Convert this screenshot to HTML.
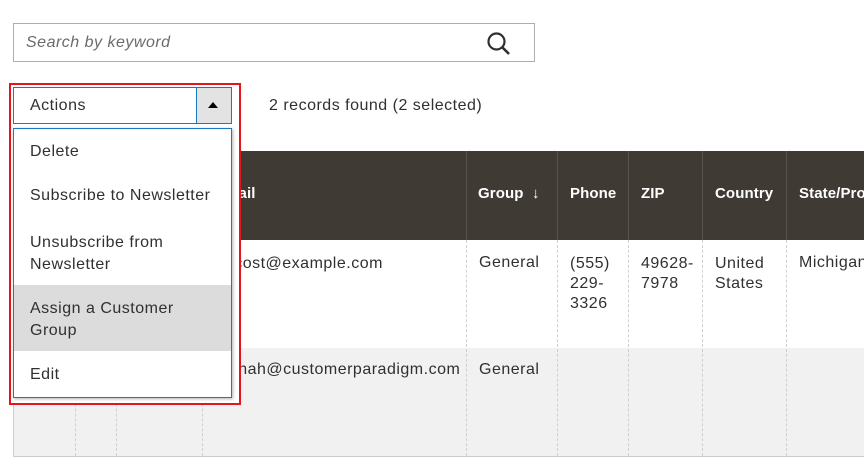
<!DOCTYPE html>
<html><head><style>
body{margin:0;width:864px;height:469px;background:#fff;font-family:"Liberation Sans",sans-serif;color:#303030;position:relative;overflow:hidden}
.a{position:absolute}
.t{font-size:16px;letter-spacing:0.5px}
.h{font-size:15px;font-weight:bold;color:#fff;top:185px;letter-spacing:0.1px}
.vl{position:absolute;width:0;border-left:1px dashed #d0d0d0}
.hl{position:absolute;width:0;border-left:1px solid #5a534d;top:151px;height:89px}
</style></head><body>
<div class="a" style="left:13px;top:23px;width:520px;height:37px;border:1px solid #adadad"></div>
<div class="a t" style="left:26px;top:34px;font-style:italic;color:#6b6b6b">Search by keyword</div>
<svg class="a" style="left:486px;top:31px" width="26" height="26" viewBox="0 0 26 26"><circle cx="10.5" cy="10.5" r="8" fill="none" stroke="#303030" stroke-width="2.2"/><line x1="16.5" y1="16.5" x2="23" y2="23" stroke="#303030" stroke-width="2.6"/></svg>

<div class="a t" style="left:269px;top:97px">2 records found (2 selected)</div>

<div class="a" style="left:13px;top:151px;width:851px;height:89px;background:#403a35"></div>
<div class="a" style="left:13px;top:240px;width:851px;height:108px;background:#fff"></div>
<div class="a" style="left:13px;top:348px;width:851px;height:108px;background:#f1f1f1;border-bottom:1px solid #ccc"></div>
<div class="a" style="left:13px;top:240px;height:216px;border-left:1px solid #ccc"></div>
<div class="hl" style="left:466px"></div><div class="hl" style="left:557px"></div><div class="hl" style="left:628px"></div><div class="hl" style="left:702px"></div><div class="hl" style="left:786px"></div>
<div class="vl" style="left:75px;top:240px;height:216px"></div>
<div class="vl" style="left:116px;top:240px;height:216px"></div>
<div class="vl" style="left:202px;top:240px;height:216px"></div>
<div class="vl" style="left:466px;top:240px;height:216px"></div>
<div class="vl" style="left:557px;top:240px;height:216px"></div>
<div class="vl" style="left:628px;top:240px;height:216px"></div>
<div class="vl" style="left:702px;top:240px;height:216px"></div>
<div class="vl" style="left:786px;top:240px;height:216px"></div>
<div class="a h" style="left:215px">Email</div>
<div class="a h" style="left:478px">Group &nbsp;↓</div>
<div class="a h" style="left:570px">Phone</div>
<div class="a h" style="left:641px">ZIP</div>
<div class="a h" style="left:715px">Country</div>
<div class="a h" style="left:799px;white-space:nowrap">State/Province</div>
<div class="a t" style="left:197px;top:254px;line-height:20px">toni_cost@example.com</div>
<div class="a t" style="left:479px;top:254px">General</div>
<div class="a t" style="left:570px;top:254px;line-height:20px">(555)<br>229-<br>3326</div>
<div class="a t" style="left:641px;top:254px;line-height:20px">49628-<br>7978</div>
<div class="a t" style="left:715px;top:254px;line-height:20px">United<br>States</div>
<div class="a t" style="left:799px;top:254px">Michigan</div>
<div class="a t" style="left:210px;top:361px">hannah@customerparadigm.com</div>
<div class="a t" style="left:479px;top:361px">General</div>

<div class="a" style="left:9px;top:83px;width:228px;height:318px;border:2px solid #e3171b;background:#fff"></div>
<div class="a" style="left:13px;top:87px;width:217px;height:35px;border:1px solid #1979c3;background:#fff"></div>
<div class="a" style="left:196px;top:88px;width:34px;height:35px;border-left:1px solid #1979c3;background:#e3e3e3"></div>
<div class="a" style="left:208px;top:102px;width:0;height:0;border-left:5px solid transparent;border-right:5px solid transparent;border-bottom:6px solid #000"></div>
<div class="a t" style="left:30px;top:97px">Actions</div>
<div class="a" style="left:13px;top:128px;width:217px;height:268px;border:1px solid #1979c3;background:#fff;box-shadow:1px 1px 3px rgba(0,0,0,.3)"></div>
<div class="a" style="left:14px;top:285px;width:217px;height:66px;background:#dcdcdc"></div>
<div class="a t" style="left:30px;top:143px">Delete</div>
<div class="a t" style="left:30px;top:187px">Subscribe to Newsletter</div>
<div class="a t" style="left:30px;top:232px;line-height:22px">Unsubscribe from<br>Newsletter</div>
<div class="a t" style="left:30px;top:298px;line-height:22px">Assign a Customer<br>Group</div>
<div class="a t" style="left:30px;top:366px">Edit</div>
</body></html>
